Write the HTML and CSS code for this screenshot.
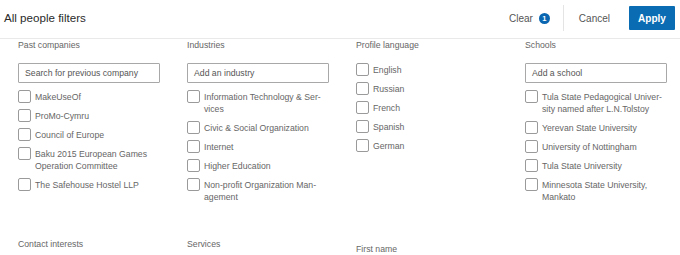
FILE: index.html
```html
<!DOCTYPE html>
<html>
<head>
<meta charset="utf-8">
<link rel="stylesheet" href="styles.css">
</head>
<body>
<header class="bar">
  <div class="title">All people filters</div>
  <div class="actions">
    <span class="clear">Clear <span class="badge">1</span></span>
    <span class="divider"></span>
    <span class="cancel">Cancel</span>
    <span class="apply">Apply</span>
  </div>
</header>
<main class="grid">
  <section class="group">
    <div class="label">Past companies</div>
    <div class="input">Search for previous company</div>
    <ul class="list">
      <li><span class="box"></span><span class="text">MakeUseOf</span></li>
      <li><span class="box"></span><span class="text">ProMo-Cymru</span></li>
      <li><span class="box"></span><span class="text">Council of Europe</span></li>
      <li><span class="box"></span><span class="text">Baku 2015 European Games<br>Operation Committee</span></li>
      <li><span class="box"></span><span class="text">The Safehouse Hostel LLP</span></li>
    </ul>
  </section>
  <section class="group">
    <div class="label">Industries</div>
    <div class="input">Add an industry</div>
    <ul class="list">
      <li><span class="box"></span><span class="text">Information Technology &amp; Ser-<br>vices</span></li>
      <li><span class="box"></span><span class="text">Civic &amp; Social Organization</span></li>
      <li><span class="box"></span><span class="text">Internet</span></li>
      <li><span class="box"></span><span class="text">Higher Education</span></li>
      <li><span class="box"></span><span class="text">Non-profit Organization Man-<br>agement</span></li>
    </ul>
  </section>
  <section class="group">
    <div class="label">Profile language</div>
    <ul class="list">
      <li><span class="box"></span><span class="text">English</span></li>
      <li><span class="box"></span><span class="text">Russian</span></li>
      <li><span class="box"></span><span class="text">French</span></li>
      <li><span class="box"></span><span class="text">Spanish</span></li>
      <li><span class="box"></span><span class="text">German</span></li>
    </ul>
  </section>
  <section class="group">
    <div class="label">Schools</div>
    <div class="input">Add a school</div>
    <ul class="list">
      <li><span class="box"></span><span class="text">Tula State Pedagogical Univer-<br>sity named after L.N.Tolstoy</span></li>
      <li><span class="box"></span><span class="text">Yerevan State University</span></li>
      <li><span class="box"></span><span class="text">University of Nottingham</span></li>
      <li><span class="box"></span><span class="text">Tula State University</span></li>
      <li><span class="box"></span><span class="text">Minnesota State University,<br>Mankato</span></li>
    </ul>
  </section>
  <section class="group">
    <div class="label">Contact interests</div>
  </section>
  <section class="group">
    <div class="label">Services</div>
  </section>
  <section class="group">
    <div class="label label-low">First name</div>
  </section>
  <section class="group"></section>
</main>
</body>
</html>
```

FILE: styles.css
```css
* { box-sizing: border-box; }
html, body {
  margin: 0;
  padding: 0;
  background: #fff;
  font-family: "Liberation Sans", Arial, sans-serif;
  color: #666;
}
.bar {
  height: 39px;
  border-bottom: 1px solid #e9e9e9;
  display: flex;
  align-items: center;
  justify-content: space-between;
  padding: 0 5px 0 4px;
}
.title {
  font-size: 11.6px;
  color: #2a2a2a;
  margin-top: -3px;
}
.actions {
  display: flex;
  align-items: center;
  height: 100%;
  margin-top: -2px;
}
.clear {
  font-size: 10px;
  color: #555;
  display: flex;
  align-items: center;
}
.badge {
  display: inline-flex;
  align-items: center;
  justify-content: center;
  width: 11px;
  height: 11px;
  border-radius: 50%;
  background: #0a66b0;
  color: #fff;
  font-size: 7.5px;
  font-weight: bold;
  margin-left: 6px;
}
.divider {
  width: 1px;
  height: 26px;
  background: #e4e4e4;
  margin: 0 15px 0 13px;
}
.cancel {
  font-size: 10px;
  color: #555;
}
.apply {
  margin-left: 19px;
  width: 46px;
  height: 24px;
  background: #0a6db3;
  color: #fff;
  font-weight: bold;
  font-size: 10px;
  display: flex;
  align-items: center;
  justify-content: center;
  border-radius: 1px;
}
.grid {
  display: grid;
  grid-template-columns: repeat(4, 142px);
  column-gap: 27px;
  row-gap: 35px;
  padding-left: 18px;
}
.group { min-width: 0; }
.label {
  font-size: 8.7px;
  line-height: 12px;
  color: #666;
  margin-bottom: 12px;
}
.label-low { padding-top: 5px; }
.input {
  height: 20px;
  border: 1px solid #a8a8a8;
  border-radius: 1px;
  font-size: 8.7px;
  line-height: 18px;
  padding-left: 6px;
  color: #555;
  margin-bottom: 7px;
  white-space: nowrap;
  overflow: hidden;
}
.list {
  list-style: none;
  margin: 0;
  padding: 0;
  display: flex;
  flex-direction: column;
  gap: 6px;
}
.list li {
  display: flex;
  align-items: flex-start;
}
.box {
  flex: none;
  width: 13px;
  height: 13px;
  border: 1px solid #9a9a9a;
  border-radius: 2px;
  margin-right: 4px;
}
.text {
  font-size: 8.7px;
  line-height: 12px;
  padding-top: 1px;
  color: #666;
}
```
